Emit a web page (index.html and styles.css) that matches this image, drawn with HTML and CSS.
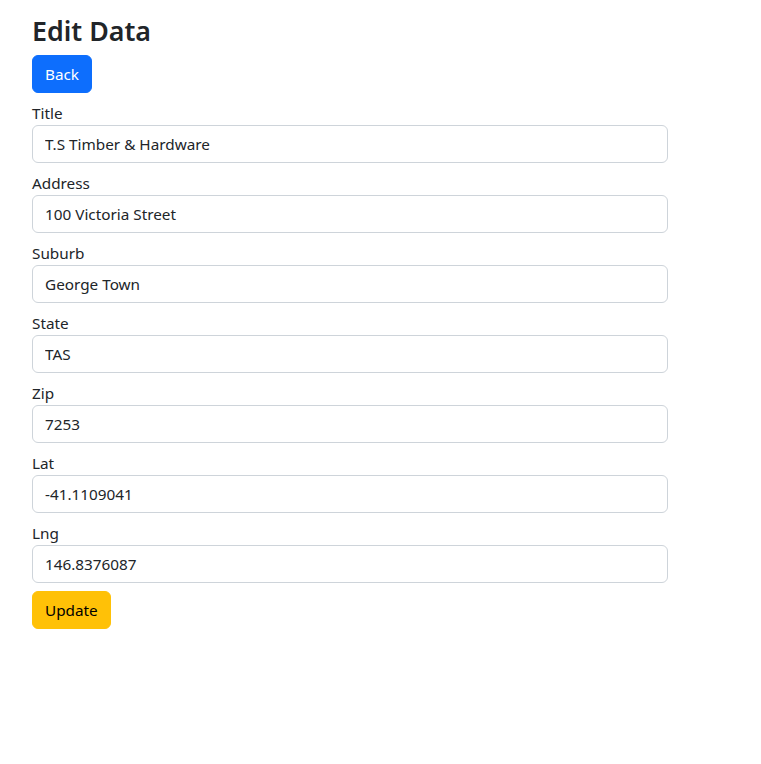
FILE: index.html
```html
<!DOCTYPE html>
<html lang="en">
<head>
<meta charset="utf-8">
<title>Edit Data</title>
<link rel="stylesheet" href="styles.css">
</head>
<body>
<div class="page">
  <h2 class="title">Edit Data</h2>
  <button class="btn btn-primary" type="button">Back</button>
  <form class="form">
    <div class="group">
      <label class="label">Title</label>
      <input class="input" type="text" value="T.S Timber &amp; Hardware">
    </div>
    <div class="group">
      <label class="label">Address</label>
      <input class="input" type="text" value="100 Victoria Street">
    </div>
    <div class="group">
      <label class="label">Suburb</label>
      <input class="input" type="text" value="George Town">
    </div>
    <div class="group">
      <label class="label">State</label>
      <input class="input" type="text" value="TAS">
    </div>
    <div class="group">
      <label class="label">Zip</label>
      <input class="input" type="text" value="7253">
    </div>
    <div class="group">
      <label class="label">Lat</label>
      <input class="input" type="text" value="-41.1109041">
    </div>
    <div class="group">
      <label class="label">Lng</label>
      <input class="input" type="text" value="146.8376087">
    </div>
    <button class="btn btn-warning" type="button">Update</button>
  </form>
</div>
</body>
</html>
```
FILE: styles.css
```css
* { box-sizing: border-box; }
html, body { margin: 0; padding: 0; background: #fff; }
body {
  font-family: "Noto Sans", "Open Sans", sans-serif;
  font-size: 15.3px;
  line-height: 24px;
  color: #212529;
}
.page {
  width: 636px;
  margin-left: 32px;
  padding-top: 14px;
}
.title {
  margin: 0 0 8px;
  height: 33px;
  padding-top: 1px;
  font-size: 26.8px;
  font-weight: 600;
  line-height: 32px;
}
.btn {
  display: inline-block;
  height: 38px;
  font-family: inherit;
  font-size: 15.3px;
  line-height: 24px;
  padding: 6px 12px;
  border: 1px solid transparent;
  border-radius: 6px;
  cursor: pointer;
}
.btn-primary { background: #0d6efd; border-color: #0d6efd; color: #fff; }
.btn-warning { background: #ffc107; border-color: #ffc107; color: #000; }
.form { margin-top: 8px; }
.group { margin-bottom: 8px; }
.label { display: block; padding-top: 1px; line-height: 23px; }
.input {
  display: block;
  width: 100%;
  height: 38px;
  font-family: inherit;
  font-size: 15.3px;
  line-height: 24px;
  padding: 6px 12px;
  color: #212529;
  background: #fff;
  border: 1px solid #ced4da;
  border-radius: 6px;
}
```
